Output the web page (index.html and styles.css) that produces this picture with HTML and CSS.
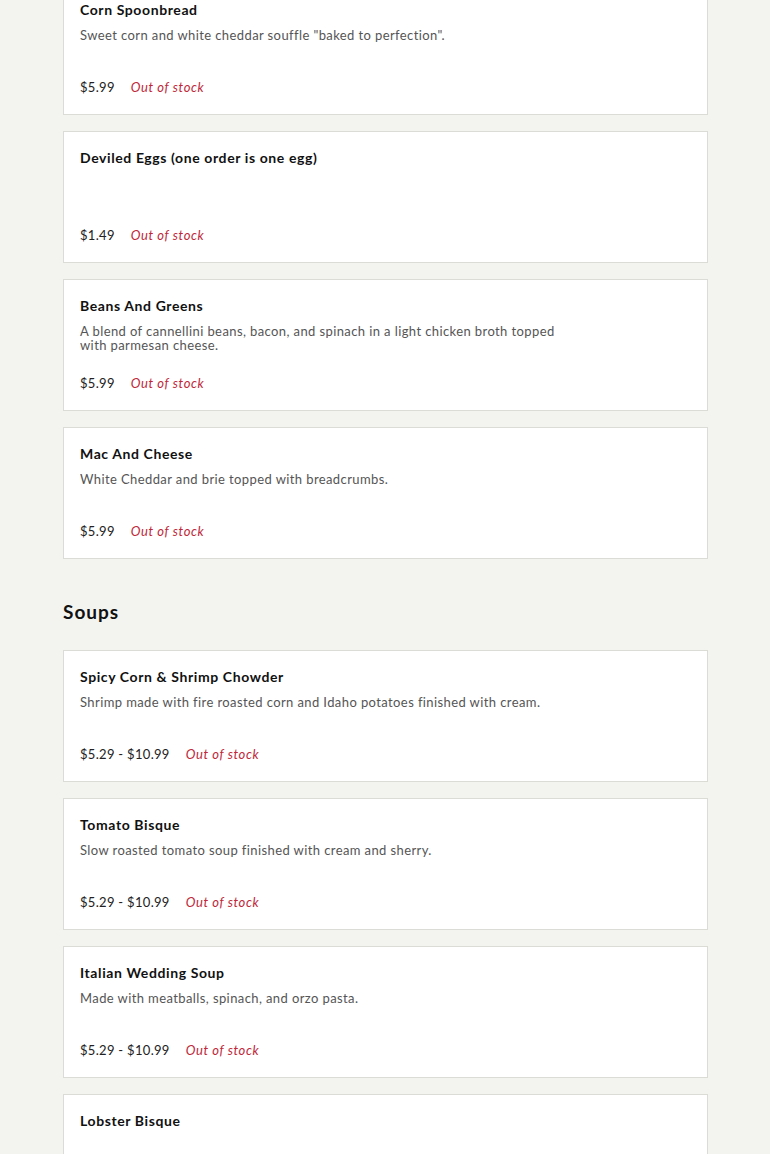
FILE: index.html
```html
<!DOCTYPE html>
<html>
<head>
<meta charset="utf-8">
<link rel="stylesheet" href="styles.css">
</head>
<body>
<main class="menu">
  <section class="group">
    <div class="card">
      <h3 class="name">Corn Spoonbread</h3>
      <p class="desc">Sweet corn and white cheddar souffle "baked to perfection".</p>
      <div class="meta"><span class="price">$5.99</span><span class="stock">Out of stock</span></div>
    </div>
    <div class="card">
      <h3 class="name">Deviled Eggs (one order is one egg)</h3>
      <p class="desc"></p>
      <div class="meta"><span class="price">$1.49</span><span class="stock">Out of stock</span></div>
    </div>
    <div class="card">
      <h3 class="name">Beans And Greens</h3>
      <p class="desc">A blend of cannellini beans, bacon, and spinach in a light chicken broth topped with parmesan cheese.</p>
      <div class="meta"><span class="price">$5.99</span><span class="stock">Out of stock</span></div>
    </div>
    <div class="card">
      <h3 class="name">Mac And Cheese</h3>
      <p class="desc">White Cheddar and brie topped with breadcrumbs.</p>
      <div class="meta"><span class="price">$5.99</span><span class="stock">Out of stock</span></div>
    </div>
  </section>
  <h2 class="section-title">Soups</h2>
  <section class="group">
    <div class="card">
      <h3 class="name">Spicy Corn &amp; Shrimp Chowder</h3>
      <p class="desc">Shrimp made with fire roasted corn and Idaho potatoes finished with cream.</p>
      <div class="meta"><span class="price">$5.29 - $10.99</span><span class="stock">Out of stock</span></div>
    </div>
    <div class="card">
      <h3 class="name">Tomato Bisque</h3>
      <p class="desc">Slow roasted tomato soup finished with cream and sherry.</p>
      <div class="meta"><span class="price">$5.29 - $10.99</span><span class="stock">Out of stock</span></div>
    </div>
    <div class="card">
      <h3 class="name">Italian Wedding Soup</h3>
      <p class="desc">Made with meatballs, spinach, and orzo pasta.</p>
      <div class="meta"><span class="price">$5.29 - $10.99</span><span class="stock">Out of stock</span></div>
    </div>
    <div class="card">
      <h3 class="name">Lobster Bisque</h3>
      <p class="desc"></p>
      <div class="meta"><span class="price">$5.29 - $10.99</span><span class="stock">Out of stock</span></div>
    </div>
  </section>
</main>
</body>
</html>
```

FILE: styles.css
```css
html, body {
  margin: 0;
  padding: 0;
  background: #f3f3ef;
}
body {
  font-family: "Lato", "Liberation Sans", sans-serif;
  color: #111;
}
.menu {
  width: 645px;
  margin: -17px 0 0 63px;
}
.group {
  display: flex;
  flex-direction: column;
  gap: 16px;
}
.card {
  background: #fff;
  border: 1px solid #dcdcd6;
  padding: 18px 16px 17px;
  display: flex;
  flex-direction: column;
}
.name {
  margin: 0;
  font-size: 14px;
  line-height: 16px;
  font-weight: 700;
  letter-spacing: 0.6px;
  color: #111;
}
.desc {
  margin: 10px 0 0;
  width: 490px;
  min-height: 28px;
  font-size: 13px;
  line-height: 14px;
  letter-spacing: 0.4px;
  color: #555;
}
.meta {
  margin-top: 21px;
  display: flex;
  gap: 16px;
  font-size: 13px;
  line-height: 20px;
}
.price { color: #222; letter-spacing: 0.3px; }
.stock { color: #c0283a; font-style: italic; letter-spacing: 0.6px; }
.section-title {
  margin: 42px 0 27px;
  font-size: 19px;
  line-height: 22px;
  font-weight: 700;
  letter-spacing: 1px;
  color: #111;
}
```
